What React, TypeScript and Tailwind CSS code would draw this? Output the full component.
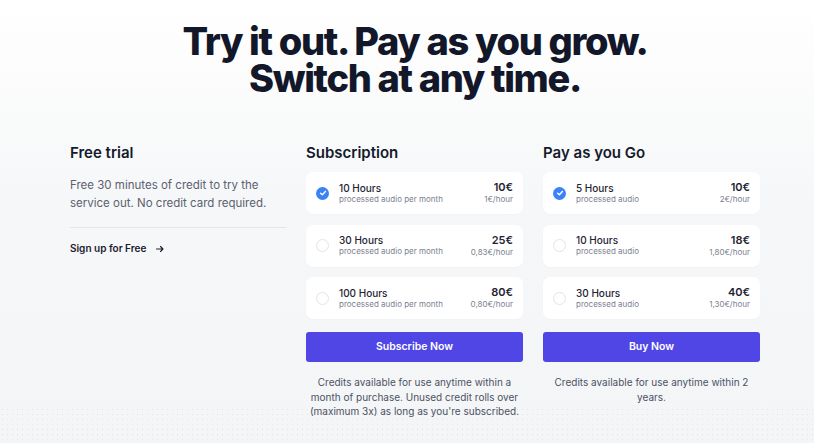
import React from "react";

type Plan = { hours: string; sub: string; price: string; per: string; checked?: boolean };

const subs: Plan[] = [
  { hours: "10 Hours", sub: "processed audio per month", price: "10€", per: "1€/hour", checked: true },
  { hours: "30 Hours", sub: "processed audio per month", price: "25€", per: "0,83€/hour" },
  { hours: "100 Hours", sub: "processed audio per month", price: "80€", per: "0,80€/hour" },
];

const payg: Plan[] = [
  { hours: "5 Hours", sub: "processed audio", price: "10€", per: "2€/hour", checked: true },
  { hours: "10 Hours", sub: "processed audio", price: "18€", per: "1,80€/hour" },
  { hours: "30 Hours", sub: "processed audio", price: "40€", per: "1,30€/hour" },
];

function Radio({ checked }: { checked?: boolean }) {
  if (checked) {
    return (
      <span className="flex h-[13px] w-[13px] shrink-0 items-center justify-center rounded-full bg-[#3b82f6]">
        <svg width="8" height="8" viewBox="0 0 10 10" fill="none">
          <path d="M2 5.2 L4.2 7.2 L8 3" stroke="white" strokeWidth="1.8" strokeLinecap="round" strokeLinejoin="round" />
        </svg>
      </span>
    );
  }
  return <span className="h-[13px] w-[13px] shrink-0 rounded-full border border-[#e2e4e8] bg-white" />;
}

function PlanCard({ p }: { p: Plan }) {
  return (
    <div className="flex h-[42px] items-center rounded-[7px] bg-white pl-[10px] pr-[10px] shadow-[0_1px_2px_rgba(0,0,0,0.02)]">
      <Radio checked={p.checked} />
      <div className="ml-[10px] flex flex-1 flex-col">
        <span className="text-[10px] leading-[12px] font-medium text-[#1f2433]">{p.hours}</span>
        <span className="text-[8px] leading-[11px] text-[#7b8190]">{p.sub}</span>
      </div>
      <div className="flex flex-col items-end">
        <span className="text-[11px] leading-[13px] font-semibold text-[#1f2433]">{p.price}</span>
        <span className="text-[8px] leading-[11px] text-[#7b8190]">{p.per}</span>
      </div>
    </div>
  );
}

function PlanColumn({ title, plans, button, lines }: { title: string; plans: Plan[]; button: string; lines: string[] }) {
  return (
    <div className="flex w-[217px] flex-col">
      <h2 className="h-[28px] text-[15px] leading-[18px] font-semibold text-[#141a2c]">{title}</h2>
      <div className="flex flex-col gap-[10.5px]">
        {plans.map((p) => (
          <PlanCard key={p.hours} p={p} />
        ))}
      </div>
      <button className="mt-[13px] flex h-[30px] items-center justify-center rounded-[3px] bg-[#4f46e5] text-[10.5px] font-semibold text-white">
        {button}
      </button>
      <p className="mt-[13px] text-center text-[10px] leading-[14.5px] whitespace-nowrap text-[#4b5263]">
        {lines.map((l, i) => (
          <React.Fragment key={i}>
            {l}
            {i < lines.length - 1 && <br />}
          </React.Fragment>
        ))}
      </p>
    </div>
  );
}

export default function App() {
  return (
    <div
      className="relative h-[443px] w-full overflow-hidden bg-[linear-gradient(to_bottom,#ffffff_0%,#f6f7f8_45%,#f4f5f7_100%)] pl-[16px]"
      style={{ fontFamily: "Inter, 'Noto Sans', sans-serif" }}
    >
      <div className="pointer-events-none absolute inset-x-0 bottom-0 h-[36px] bg-[radial-gradient(#e4e6ea_0.8px,transparent_0.9px)] bg-[length:5px_5px]" />
      <div className="relative mx-auto w-[690px]">
        <h1 className="pt-[23px] text-center text-[38px] leading-[37px] font-extrabold tracking-[-0.035em] text-[#121729]">
          Try it out. Pay as you grow.
          <br />
          Switch at any time.
        </h1>
        <div className="mt-[47px] flex gap-[20px]">
          <div className="flex w-[216px] flex-col">
            <h2 className="h-[28px] text-[15px] leading-[18px] font-semibold text-[#141a2c]">Free trial</h2>
            <p className="mt-[4px] text-[11.5px] leading-[18px] text-[#5b6170]">
              Free 30 minutes of credit to try the service out. No credit card required.
            </p>
            <div className="mt-[15px] h-px bg-[#e4e6ea]" />
            <div className="mt-[13px] flex items-center gap-[9px] text-[10px] font-semibold text-[#1a2030]">
              <span>Sign up for Free</span>
              <svg width="10" height="10" viewBox="0 0 10 10" fill="none">
                <path d="M1.5 5 H8 M5.5 2.5 L8 5 L5.5 7.5" stroke="#1a2030" strokeWidth="1.1" strokeLinecap="round" strokeLinejoin="round" />
              </svg>
            </div>
          </div>
          <PlanColumn
            title="Subscription"
            plans={subs}
            button="Subscribe Now"
            lines={[
              "Credits available for use anytime within a",
              "month of purchase. Unused credit rolls over",
              "(maximum 3x) as long as you're subscribed.",
            ]}
          />
          <PlanColumn
            title="Pay as you Go"
            plans={payg}
            button="Buy Now"
            lines={["Credits available for use anytime within 2", "years."]}
          />
        </div>
      </div>
    </div>
  );
}
